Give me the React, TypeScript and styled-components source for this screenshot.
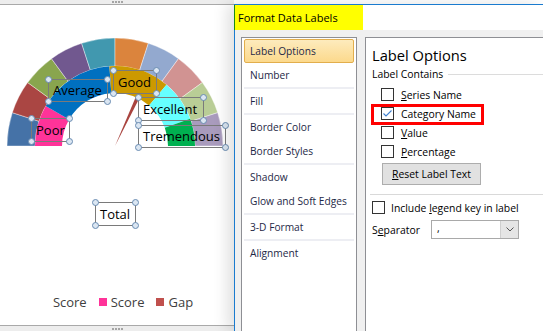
import React from 'react';
import styled, { createGlobalStyle } from 'styled-components';

// === GLOBAL ===
const GlobalStyle = createGlobalStyle`
  html, body { margin: 0; padding: 0; background: #fff; }
  body { font-family: "Open Sans", "Noto Sans", sans-serif; }
  * { box-sizing: border-box; }
`;

const Screen = styled.div`
  width: 543px; height: 331px; display: flex; overflow: hidden; background: #fff;
`;

// === CHART SIDE ===
const ChartPanel = styled.div`
  width: 234px; flex-shrink: 0; display: flex; flex-direction: column;
`;
const Strip = styled.div<{ $edge: 'top' | 'bottom' }>`
  height: ${p => (p.$edge === 'top' ? 5 : 6)}px;
  background: #ededed;
  display: flex; justify-content: center;
  align-items: ${p => (p.$edge === 'top' ? 'flex-start' : 'flex-end')};
  border-${p => (p.$edge === 'top' ? 'bottom' : 'top')}: 1px solid #a9a9a9;
`;
const Grip = styled.div`
  display: flex; gap: 1px; padding: 1px 0;
  span { width: 2px; height: 2px; background: #a5a5a5; }
`;
const Canvas = styled.div`
  flex: 1; position: relative; display: flex; flex-direction: column; justify-content: flex-end;
`;
const Plot = styled.svg`
  position: absolute; left: 0; top: 0;
`;
const LabelBox = styled.div`
  position: absolute; border: 1px solid #7a7a7a;
  display: flex; align-items: center; padding-left: 4px;
  font-size: 13px; color: #000; white-space: nowrap; line-height: 1;
`;
const Handle = styled.span<{ $x: 'l' | 'r'; $y: 't' | 'b' }>`
  position: absolute; width: 7px; height: 7px; border-radius: 50%;
  background: #dbe6f2; border: 1px solid #6a8cb2;
  ${p => (p.$x === 'l' ? 'left: -4px;' : 'right: -4px;')}
  ${p => (p.$y === 't' ? 'top: -4px;' : 'bottom: -4px;')}
`;
const Legend = styled.div`
  display: flex; justify-content: center; align-items: center;
  padding: 0 0 14px 0; font-size: 13px; color: #404040; gap: 12px;
`;
const LegendItem = styled.div`
  display: flex; align-items: center; gap: 4px; line-height: 18px;
`;
const Swatch = styled.span<{ $color: string }>`
  width: 8px; height: 8px; background: ${p => p.$color};
`;

// === DIALOG ===
const Dialog = styled.div`
  flex: 1; margin-top: 4px; display: flex; flex-direction: column;
  border-top: 1px solid #1a7bcf; border-left: 1px solid #1a7bcf;
  box-shadow: -7px 0 14px rgba(0, 0, 0, 0.12); position: relative; z-index: 1;
`;
const TitleBar = styled.div`
  height: 25px; background: #fff; display: flex;
`;
const Highlight = styled.div`
  margin-left: -1px; width: 129px; background: #ffff00; border-left: 1px solid #1d8a12;
  display: flex; align-items: center; padding-left: 3px;
  font-size: 11px; color: #000;
`;
const Body = styled.div`
  flex: 1; background: #f0f0f0; display: flex; gap: 8px; padding: 7px 0 0 6px;
`;
const NavList = styled.div`
  width: 116px; flex-shrink: 0; background: #fff;
  border: 1px solid #8e8f94; border-bottom: none; padding: 1px;
  display: flex; flex-direction: column;
`;
const NavItem = styled.div<{ $active?: boolean }>`
  height: 24px; margin: 0 1px; padding-left: 5px; display: flex; align-items: center;
  font-size: 10.2px; color: #1e2846; border-radius: 2px;
  border: 1px solid ${p => (p.$active ? '#e2ae4c' : 'transparent')};
  background: ${p => (p.$active ? 'linear-gradient(#fdebbd, #fcd98c)' : 'transparent')};
`;
const NavSep = styled.div`
  height: 2px; margin: 0 1px; background: #edeef3;
`;
const Options = styled.div`
  flex: 1; background: #fff; border-left: 1px solid #8e8f94; border-top: 1px solid #8e8f94;
  padding: 7px 0 0 6px; font-size: 10.4px; color: #000;
`;
const Heading = styled.div`
  font-size: 14.7px; line-height: 20px; margin-bottom: 1px;
`;
const GroupTitle = styled.div`
  display: flex; align-items: center; gap: 5px; line-height: 16px;
  &::after { content: ''; flex: 1; height: 1px; background: #dcdcdc; }
`;
const CheckList = styled.div`
  margin: 3px 0 0 9px;
`;
const CheckRow = styled.div<{ $h?: number }>`
  position: relative; height: ${p => p.$h ?? 19}px; display: flex; align-items: center; gap: 7px;
`;
const Box = styled.span`
  width: 13px; height: 13px; border: 1px solid #333; background: #fff;
  display: flex; align-items: center; justify-content: center; flex-shrink: 0;
`;
const Callout = styled.div`
  position: absolute; left: -10px; top: 0; width: 113px; height: 21px;
  border: 3px solid #ff0000; pointer-events: none;
`;
const Button = styled.div`
  margin: 2px 0 0 10px; width: 99px; height: 22px; background: #e1e1e1; border: 1px solid #adadad;
  display: flex; align-items: center; justify-content: center;
`;
const Rule = styled.div`
  height: 1px; background: #d9d9d9; margin: 9px 0 0 -2px;
`;
const FieldRow = styled.div`
  display: flex; align-items: center; margin-top: 3px; height: 19px;
`;
const FieldLabel = styled.span`
  width: 59px;
`;
const Select = styled.div`
  width: 88px; height: 19px; border: 1px solid #a9a9a9; display: flex; background: #fff;
`;
const SelectValue = styled.span`
  flex: 1; padding-left: 5px; line-height: 15px;
`;
const SelectArrow = styled.span`
  width: 18px; background: #e5e5e5; border-left: 1px solid #cfcfcf;
  display: flex; align-items: center; justify-content: center;
`;

// === DATA ===
const OFFSET = 5; // canvas top in page coords
const CX = 115;
const CY = 146 - OFFSET;

const outerRing = ['#4572A7', '#AA4643', '#89A54E', '#71588F', '#4198AF', '#DB843D', '#93A9CF', '#D19392', '#B9CD96', '#A99BBD'];
const innerRing = [
  { from: 180, to: 150, color: '#FF3399' },
  { from: 150, to: 94, color: '#0070C0' },
  { from: 94, to: 50, color: '#CC9900' },
  { from: 50, to: 20, color: '#66FFFF' },
  { from: 20, to: 0, color: '#00B050' },
];
const labels = [
  { text: 'Average', x: 48, y: 79, w: 60, h: 23 },
  { text: 'Good', x: 113, y: 70, w: 44, h: 24 },
  { text: 'Poor', x: 31, y: 118, w: 39, h: 24 },
  { text: 'Excellent', x: 138, y: 97, w: 66, h: 24 },
  { text: 'Tremendous', x: 138, y: 125, w: 88, h: 23 },
  { text: 'Total', x: 95, y: 202, w: 41, h: 24 },
];
const navGroups = [
  ['Label Options', 'Number'],
  ['Fill'],
  ['Border Color', 'Border Styles'],
  ['Shadow', 'Glow and Soft Edges'],
  ['3-D Format'],
  ['Alignment'],
];

const pt = (r: number, a: number) => {
  const rad = (a * Math.PI) / 180;
  return [CX + r * Math.cos(rad), CY - r * Math.sin(rad)];
};
const ring = (r0: number, r1: number, a0: number, a1: number) => {
  const [x0, y0] = pt(r1, a0);
  const [x1, y1] = pt(r1, a1);
  const [x2, y2] = pt(r0, a1);
  const [x3, y3] = pt(r0, a0);
  return `M${x0} ${y0} A${r1} ${r1} 0 0 1 ${x1} ${y1} L${x2} ${y2} A${r0} ${r0} 0 0 0 ${x3} ${y3} Z`;
};

const Gauge: React.FC = () => {
  const [n1x, n1y] = pt(55, 63);
  const [n2x, n2y] = pt(55, 67);
  return (
    <Plot width={234} height={320} viewBox="0 0 234 320">
      {outerRing.map((c, i) => (
        <path key={c} d={ring(80, 108, 180 - i * 18, 180 - (i + 1) * 18)} fill={c} stroke="#fff" strokeWidth={0.4} />
      ))}
      {innerRing.map(s => (
        <path key={s.color} d={ring(53, 80, s.from, s.to)} fill={s.color} />
      ))}
      <path d={`M${CX} ${CY} L${n1x} ${n1y} L${n2x} ${n2y} Z`} fill="#A9443F" />
    </Plot>
  );
};

const Check: React.FC<{ checked?: boolean }> = ({ checked }) => (
  <Box>
    {checked && (
      <svg width="11" height="11" viewBox="0 0 11 11">
        <path d="M1.5 5.5 L4 8 L9.5 2.5" fill="none" stroke="#3d7fd0" strokeWidth="1.1" />
      </svg>
    )}
  </Box>
);

const App: React.FC = () => {
  return (
    <Screen>
      <GlobalStyle />
      <ChartPanel>
        <Strip $edge="top">
          <Grip><span /><span /><span /><span /></Grip>
        </Strip>
        <Canvas>
          <Gauge />
          {labels.map(l => (
            <LabelBox key={l.text} style={{ left: l.x, top: l.y - OFFSET, width: l.w, height: l.h }}>
              {l.text}
              <Handle $x="l" $y="t" />
              <Handle $x="r" $y="t" />
              <Handle $x="l" $y="b" />
              <Handle $x="r" $y="b" />
            </LabelBox>
          ))}
          <Legend>
            <LegendItem><Swatch $color="transparent" />Score</LegendItem>
            <LegendItem><Swatch $color="#FF3399" />Score</LegendItem>
            <LegendItem><Swatch $color="#C0504D" />Gap</LegendItem>
          </Legend>
        </Canvas>
        <Strip $edge="bottom">
          <Grip><span /><span /><span /><span /></Grip>
        </Strip>
      </ChartPanel>

      <Dialog>
        <TitleBar>
          <Highlight>Format Data Labels</Highlight>
        </TitleBar>
        <Body>
          <NavList>
            {navGroups.map((group, gi) => (
              <React.Fragment key={gi}>
                {gi > 0 && <NavSep />}
                {group.map(item => (
                  <NavItem key={item} $active={item === 'Label Options'}>{item}</NavItem>
                ))}
              </React.Fragment>
            ))}
          </NavList>
          <Options>
            <Heading>Label Options</Heading>
            <GroupTitle>Label Contains</GroupTitle>
            <CheckList>
              <CheckRow><Check /><span><u>S</u>eries Name</span></CheckRow>
              <CheckRow><Check checked /><span>Category Name</span><Callout /></CheckRow>
              <CheckRow><Check /><span><u>V</u>alue</span></CheckRow>
              <CheckRow><Check /><span><u>P</u>ercentage</span></CheckRow>
            </CheckList>
            <Button><span><u>R</u>eset Label Text</span></Button>
            <Rule />
            <FieldRow>
              <CheckRow $h={17} style={{ gap: 6 }}><Check /><span>Include <u>l</u>egend key in label</span></CheckRow>
            </FieldRow>
            <FieldRow>
              <FieldLabel>S<u>e</u>parator</FieldLabel>
              <Select>
                <SelectValue>,</SelectValue>
                <SelectArrow>
                  <svg width="8" height="5" viewBox="0 0 8 5">
                    <path d="M0.5 0.5 L4 4 L7.5 0.5" fill="none" stroke="#555" strokeWidth="1" />
                  </svg>
                </SelectArrow>
              </Select>
            </FieldRow>
          </Options>
        </Body>
      </Dialog>
    </Screen>
  );
};

export default App;
